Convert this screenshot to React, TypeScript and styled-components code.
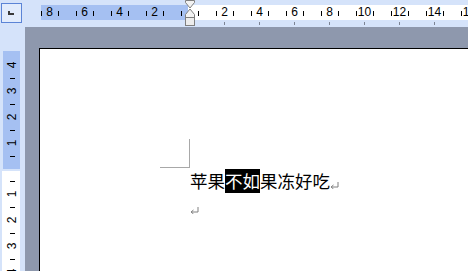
import React from 'react';
import styled, { createGlobalStyle } from 'styled-components';

const Global = createGlobalStyle`
  html, body { margin: 0; padding: 0; background: #d5e3fa; }
  #root { width: 468px; height: 271px; overflow: hidden; }
`;

const Window = styled.div`
  width: 468px;
  height: 271px;
  overflow: hidden;
  display: grid;
  grid-template-columns: 25px 1fr;
  grid-template-rows: 27px 1fr;
  background: #d5e3fa;
  font-family: "Liberation Sans Narrow", "Liberation Sans", Arial, sans-serif;
`;

const Corner = styled.div`
  padding: 3px 0 0 1px;
`;

const TabSelector = styled.div`
  box-sizing: border-box;
  width: 21px;
  height: 20px;
  border: 1px solid #5b84d6;
  background: #e2ecfc;
  padding: 7px 0 0 6px;
`;

const TabGlyph = styled.span`
  display: block;
  width: 4px;
  height: 2px;
  border-left: 2px solid #3a3a3a;
  border-bottom: 2px solid #3a3a3a;
`;

const TopBar = styled.div`
  padding: 5px 0 0 16px;
  overflow: hidden;
`;

const HRuler = styled.div`
  position: relative;
  display: flex;
  width: 640px;
  height: 15px;
`;

const RulerMargin = styled.div<{ $size: number }>`
  flex: 0 0 ${(p) => p.$size}px;
  background: #a5c0f2;
`;

const RulerBody = styled.div`
  flex: 1;
  background: #ffffff;
`;

const HTick = styled.span`
  position: absolute;
  top: 6px;
  width: 1px;
  height: 5px;
  background: #000;
`;

const HNum = styled.span`
  position: absolute;
  top: 0;
  height: 15px;
  line-height: 15px;
  font-size: 12px;
  color: #000;
  transform: translateX(-50%);
`;

const Marker = styled.svg`
  position: absolute;
  left: 144px;
  top: -5px;
`;

const TabStopRow = styled.div`
  position: relative;
  height: 3px;
  margin-top: 2px;
`;

const TabStop = styled.span`
  position: absolute;
  top: 0;
  width: 1px;
  height: 3px;
  background: #7c8494;
`;

const LeftRail = styled.div`
  padding: 24px 0 0 2px;
  overflow: hidden;
`;

const VRuler = styled.div`
  position: relative;
  display: flex;
  flex-direction: column;
  width: 18px;
  height: 300px;
`;

const VMargin = styled.div<{ $size: number }>`
  flex: 0 0 ${(p) => p.$size}px;
  margin-left: 1px;
  background: #a5c0f2;
`;

const VBody = styled.div`
  flex: 1;
  margin-top: 2px;
  background: #ffffff;
`;

const VTick = styled.span`
  position: absolute;
  left: 8px;
  width: 5px;
  height: 1px;
  background: #000;
`;

const VNum = styled.span`
  position: absolute;
  left: 1px;
  width: 18px;
  height: 12px;
  line-height: 12px;
  text-align: center;
  font-size: 12px;
  color: #000;
  transform: translateY(-50%) rotate(-90deg);
`;

const Workspace = styled.div`
  background: #8e98ad;
  overflow: hidden;
  padding: 21px 0 0 14px;
`;

const Page = styled.div`
  box-sizing: border-box;
  width: 640px;
  height: 400px;
  background: #ffffff;
  border-left: 1px solid #000;
  border-top: 1px solid #000;
  padding: 90px 0 0 120px;
`;

const Body = styled.div`
  display: grid;
  grid-template-columns: 30px auto;
  grid-template-rows: 29px auto;
  row-gap: 1px;
`;

const CropMark = styled.div`
  box-sizing: border-box;
  border-right: 1px solid #a8a8a8;
  border-bottom: 1px solid #a8a8a8;
`;

const TextArea = styled.div`
  grid-column: 2;
  grid-row: 2;
  font-family: "Noto Sans CJK SC", "Noto Sans", sans-serif;
  font-size: 17.5px;
  color: #000;
`;

const Line = styled.div`
  height: 24px;
  line-height: 24px;
  white-space: nowrap;
`;

const Selected = styled.span`
  display: inline-block;
  height: 24px;
  background: #000;
  color: #fff;
  vertical-align: top;
`;

const ParaMark = styled.svg<{ $drop: number }>`
  display: inline-block;
  vertical-align: ${(p) => -p.$drop}px;
`;

const H_ORIGIN = 41;
const H_ZERO = 189.5;
const H_UNIT = 17.5;
const V_ORIGIN = 51;
const V_ZERO = 168.5;
const V_UNIT = 25.8;

const hNumbers = [-8, -6, -4, -2, 2, 4, 6, 8, 10, 12, 14, 16];
const hTickCenters = [-8, -6, -4, -2, 0, 2, 4, 6, 8, 10, 12, 14, 16];
const vNumbers = [-4, -3, -2, -1, 1, 2, 3, 4];
const vTickCenters = [-4, -3, -2, -1, 1, 2, 3, 4];

function Mark({ drop }: { drop: number }) {
  return (
    <ParaMark $drop={drop} width="9" height="7" viewBox="0 0 9 7">
      <path d="M8 0 V5 H1.5" fill="none" stroke="#808080" strokeWidth="1" />
      <path d="M3.5 3 L1 5 L3.5 7" fill="none" stroke="#808080" strokeWidth="1" />
    </ParaMark>
  );
}

export default function App() {
  const hTicks: number[] = [];
  hTickCenters.forEach((n) => {
    hTicks.push(H_ZERO + n * H_UNIT - H_UNIT / 2, H_ZERO + n * H_UNIT + H_UNIT / 2);
  });
  const vTicks: number[] = [];
  vTickCenters.forEach((n) => {
    const c = V_ZERO + n * V_UNIT;
    vTicks.push(n < 0 ? c + V_UNIT / 2 : c - V_UNIT / 2);
  });
  vTicks.push(V_ZERO + 4.5 * V_UNIT);
  const tabStops = [1, 2, 3, 4, 5, 6, 7].map((k) => H_ZERO - 0.5 + 35 * k);

  return (
    <>
      <Global />
      <Window>
        <Corner>
          <TabSelector>
            <TabGlyph />
          </TabSelector>
        </Corner>
        <TopBar>
          <HRuler>
            <RulerMargin $size={147} />
            <RulerBody />
            {hTicks
              .filter((x) => x >= H_ORIGIN - 1)
              .map((x, i) => (
                <HTick key={`t${i}`} style={{ left: Math.max(0, Math.round(x - H_ORIGIN)) }} />
              ))}
            {hNumbers.map((n) => (
              <HNum key={`n${n}`} style={{ left: H_ZERO + n * H_UNIT - H_ORIGIN }}>
                {Math.abs(n)}
              </HNum>
            ))}
            <Marker width="10" height="27" viewBox="0 0 10 27">
              <polygon points="0.5,0.5 9.5,0.5 9.5,2.5 5,8 0.5,2.5" fill="#f2f2f2" stroke="#7f7f7f" />
              <polygon points="5,9 9.5,14.5 9.5,17.5 0.5,17.5 0.5,14.5" fill="#f2f2f2" stroke="#7f7f7f" />
              <rect x="0.5" y="17.5" width="9" height="8" fill="#ececec" stroke="#7f7f7f" />
            </Marker>
          </HRuler>
          <TabStopRow>
            {tabStops.map((x) => (
              <TabStop key={x} style={{ left: Math.round(x - H_ORIGIN) }} />
            ))}
          </TabStopRow>
        </TopBar>
        <LeftRail>
          <VRuler>
            <VMargin $size={118} />
            <VBody />
            {vTicks.map((y, i) => (
              <VTick key={`vt${i}`} style={{ top: Math.round(y - V_ORIGIN) }} />
            ))}
            {vNumbers.map((n) => (
              <VNum key={`vn${n}`} style={{ top: V_ZERO + n * V_UNIT - V_ORIGIN }}>
                {Math.abs(n)}
              </VNum>
            ))}
          </VRuler>
        </LeftRail>
        <Workspace>
          <Page>
            <Body>
              <CropMark />
              <TextArea>
                <Line>
                  苹果<Selected>不如</Selected>果冻好吃
                  <Mark drop={1} />
                </Line>
                <Line>
                  <Mark drop={2} />
                </Line>
              </TextArea>
            </Body>
          </Page>
        </Workspace>
      </Window>
    </>
  );
}
